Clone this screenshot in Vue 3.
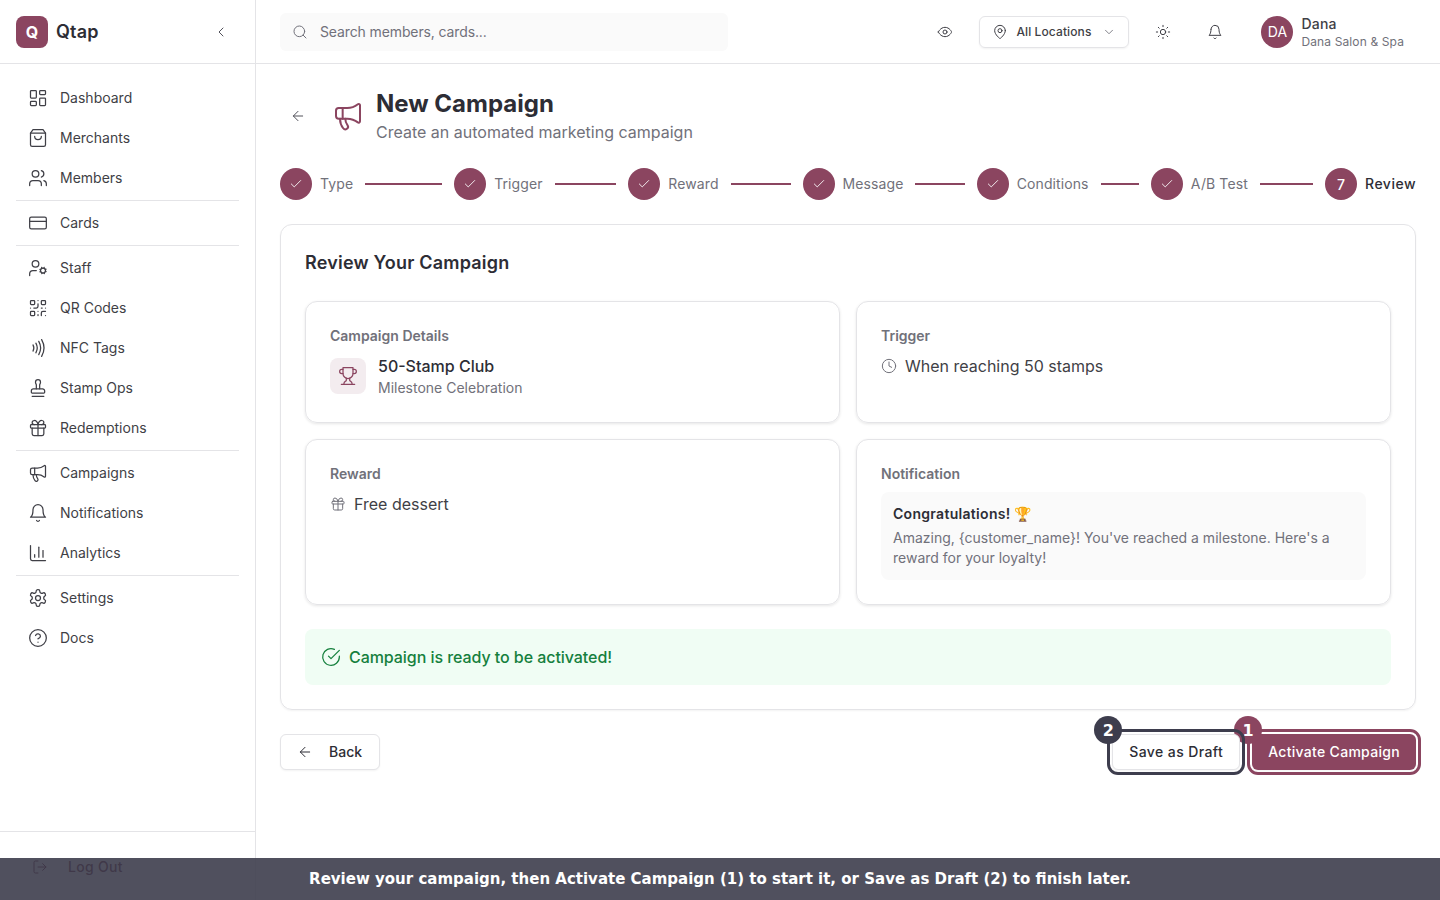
<script setup>
const icons = {
  dashboard: '<rect x="3" y="3" width="7" height="9" rx="1"/><rect x="14" y="3" width="7" height="5" rx="1"/><rect x="14" y="12" width="7" height="9" rx="1"/><rect x="3" y="16" width="7" height="5" rx="1"/>',
  bag: '<path d="M6 2 3 6v14a2 2 0 0 0 2 2h14a2 2 0 0 0 2-2V6l-3-4Z"/><path d="M3 6h18"/><path d="M16 10a4 4 0 0 1-8 0"/>',
  users: '<path d="M16 21v-2a4 4 0 0 0-4-4H6a4 4 0 0 0-4 4v2"/><circle cx="9" cy="7" r="4"/><path d="M22 21v-2a4 4 0 0 0-3-3.87"/><path d="M16 3.13a4 4 0 0 1 0 7.75"/>',
  card: '<rect x="2" y="5" width="20" height="14" rx="2"/><path d="M2 10h20"/>',
  staff: '<circle cx="18" cy="15" r="3"/><circle cx="9" cy="7" r="4"/><path d="M10 15H6a4 4 0 0 0-4 4v2"/><path d="m21.7 16.4-.9-.3"/><path d="m15.2 13.9-.9-.3"/><path d="m16.6 18.7.3-.9"/><path d="m19.1 12.2.3-.9"/><path d="m19.6 18.7-.4-1"/><path d="m16.8 12.3-.4-1"/><path d="m14.3 16.6 1-.4"/><path d="m20.7 13.8 1-.4"/>',
  qr: '<rect x="3" y="3" width="5" height="5" rx="1"/><rect x="16" y="3" width="5" height="5" rx="1"/><rect x="3" y="16" width="5" height="5" rx="1"/><path d="M21 16h-3a2 2 0 0 0-2 2v3"/><path d="M21 21v.01"/><path d="M12 7v3a2 2 0 0 1-2 2H7"/><path d="M3 12h.01"/><path d="M12 3h.01"/><path d="M12 16v.01"/><path d="M16 12h1"/><path d="M21 12v.01"/><path d="M12 21v-1"/>',
  nfc: '<path d="M6 8.32a7.43 7.43 0 0 1 0 7.36"/><path d="M9.46 6.21a11.76 11.76 0 0 1 0 11.58"/><path d="M12.91 4.1a15.91 15.91 0 0 1 .01 15.8"/><path d="M16.37 2a20.16 20.16 0 0 1 0 20"/>',
  stamp: '<path d="M5 22h14"/><path d="M19.27 13.73A2.5 2.5 0 0 0 17.5 13h-11A2.5 2.5 0 0 0 4 15.5V17a1 1 0 0 0 1 1h14a1 1 0 0 0 1-1v-1.5c0-.66-.26-1.3-.73-1.77Z"/><path d="M14 13V8.5C14 7 15 7 15 5a3 3 0 0 0-3-3c-1.66 0-3 1-3 3s1 2 1 3.5V13"/>',
  gift: '<rect x="3" y="8" width="18" height="4" rx="1"/><path d="M12 8v13"/><path d="M19 12v7a2 2 0 0 1-2 2H7a2 2 0 0 1-2-2v-7"/><path d="M7.5 8a2.5 2.5 0 0 1 0-5A4.8 8 0 0 1 12 8a4.8 8 0 0 1 4.5-5 2.5 2.5 0 0 1 0 5"/>',
  megaphone: '<path d="M11 6a13 13 0 0 0 8.4-2.8A1 1 0 0 1 21 4v12a1 1 0 0 1-1.6.8A13 13 0 0 0 11 14H5a2 2 0 0 1-2-2V8a2 2 0 0 1 2-2z"/><path d="M6 14a12 12 0 0 0 2.4 7.2 2 2 0 0 0 3.2-2.4A8 8 0 0 1 10 14"/><path d="M8 6v8"/>',
  bell: '<path d="M6 8a6 6 0 0 1 12 0c0 7 3 9 3 9H3s3-2 3-9"/><path d="M10.3 21a1.94 1.94 0 0 0 3.4 0"/>',
  chart: '<path d="M3 3v16a2 2 0 0 0 2 2h16"/><path d="M8 17v-3"/><path d="M13 17V5"/><path d="M18 17V9"/>',
  settings: '<path d="M12.22 2h-.44a2 2 0 0 0-2 2v.18a2 2 0 0 1-1 1.73l-.43.25a2 2 0 0 1-2 0l-.15-.08a2 2 0 0 0-2.73.73l-.22.38a2 2 0 0 0 .73 2.73l.15.1a2 2 0 0 1 1 1.72v.51a2 2 0 0 1-1 1.74l-.15.09a2 2 0 0 0-.73 2.73l.22.38a2 2 0 0 0 2.73.73l.15-.08a2 2 0 0 1 2 0l.43.25a2 2 0 0 1 1 1.73V20a2 2 0 0 0 2 2h.44a2 2 0 0 0 2-2v-.18a2 2 0 0 1 1-1.73l.43-.25a2 2 0 0 1 2 0l.15.08a2 2 0 0 0 2.73-.73l.22-.39a2 2 0 0 0-.73-2.73l-.15-.08a2 2 0 0 1-1-1.74v-.5a2 2 0 0 1 1-1.74l.15-.09a2 2 0 0 0 .73-2.73l-.22-.38a2 2 0 0 0-2.73-.73l-.15.08a2 2 0 0 1-2 0l-.43-.25a2 2 0 0 1-1-1.73V4a2 2 0 0 0-2-2z"/><circle cx="12" cy="12" r="3"/>',
  help: '<circle cx="12" cy="12" r="10"/><path d="M9.09 9a3 3 0 0 1 5.83 1c0 2-3 3-3 3"/><path d="M12 17h.01"/>',
  eye: '<path d="M2 12s3-7 10-7 10 7 10 7-3 7-10 7-10-7-10-7Z"/><circle cx="12" cy="12" r="3"/>',
  pin: '<path d="M20 10c0 6-8 12-8 12s-8-6-8-12a8 8 0 0 1 16 0Z"/><circle cx="12" cy="10" r="3"/>',
  sun: '<circle cx="12" cy="12" r="4"/><path d="M12 2v2"/><path d="M12 20v2"/><path d="m4.93 4.93 1.41 1.41"/><path d="m17.66 17.66 1.41 1.41"/><path d="M2 12h2"/><path d="M20 12h2"/><path d="m6.34 17.66-1.41 1.41"/><path d="m19.07 4.93-1.41 1.41"/>',
  search: '<circle cx="11" cy="11" r="8"/><path d="m21 21-4.3-4.3"/>',
  arrowLeft: '<path d="m12 19-7-7 7-7"/><path d="M19 12H5"/>',
  chevronLeft: '<path d="m15 18-6-6 6-6"/>',
  chevronDown: '<path d="m6 9 6 6 6-6"/>',
  check: '<path d="M20 6 9 17l-5-5"/>',
  trophy: '<path d="M6 9H4.5a2.5 2.5 0 0 1 0-5H6"/><path d="M18 9h1.5a2.5 2.5 0 0 0 0-5H18"/><path d="M4 22h16"/><path d="M10 14.66V17c0 .55-.47.98-.97 1.21C7.85 18.75 7 20.24 7 22"/><path d="M14 14.66V17c0 .55.47.98.97 1.21C16.15 18.75 17 20.24 17 22"/><path d="M18 2H6v7a6 6 0 0 0 12 0V2Z"/>',
  clock: '<circle cx="12" cy="12" r="10"/><path d="M12 6v6l4 2"/>',
  circleCheck: '<path d="M22 11.08V12a10 10 0 1 1-5.93-9.14"/><path d="m9 11 3 3L22 4"/>',
  logout: '<path d="M9 21H5a2 2 0 0 1-2-2V5a2 2 0 0 1 2-2h4"/><path d="m16 17 5-5-5-5"/><path d="M21 12H9"/>',
}

const navGroups = [
  [
    { label: "Dashboard", icon: "dashboard" },
    { label: "Merchants", icon: "bag" },
    { label: "Members", icon: "users" },
  ],
  [{ label: "Cards", icon: "card" }],
  [
    { label: "Staff", icon: "staff" },
    { label: "QR Codes", icon: "qr" },
    { label: "NFC Tags", icon: "nfc" },
    { label: "Stamp Ops", icon: "stamp" },
    { label: "Redemptions", icon: "gift" },
  ],
  [
    { label: "Campaigns", icon: "megaphone" },
    { label: "Notifications", icon: "bell" },
    { label: "Analytics", icon: "chart" },
  ],
  [
    { label: "Settings", icon: "settings" },
    { label: "Docs", icon: "help" },
  ],
]

const steps = ["Type", "Trigger", "Reward", "Message", "Conditions", "A/B Test"]
</script>

<template>
  <div class="app">
    <aside class="sidebar">
      <div class="brand">
        <span class="logo">Q</span>
        <span class="brand-name">Qtap</span>
        <svg class="ic collapse" viewBox="0 0 24 24" v-html="icons.chevronLeft"></svg>
      </div>

      <nav class="nav">
        <div v-for="(group, i) in navGroups" :key="i" class="nav-group">
          <a v-for="item in group" :key="item.label" class="nav-item">
            <svg class="ic nav-icon" viewBox="0 0 24 24" v-html="icons[item.icon]"></svg>
            <span class="raised">{{ item.label }}</span>
          </a>
        </div>
      </nav>

      <div class="side-foot">
        <a class="nav-item logout">
          <svg class="ic i16" viewBox="0 0 24 24" v-html="icons.logout"></svg>
          <span class="raised">Log Out</span>
        </a>
      </div>
    </aside>

    <div class="main">
      <header class="topbar">
        <div class="search">
          <svg class="ic search-icon" viewBox="0 0 24 24" v-html="icons.search"></svg>
          <span>Search members, cards...</span>
        </div>
        <div class="top-actions">
          <span class="icon-btn"><svg class="ic i16" viewBox="0 0 24 24" v-html="icons.eye"></svg></span>
          <div class="location">
            <svg class="ic i16" viewBox="0 0 24 24" v-html="icons.pin"></svg>
            <span class="location-name">All Locations</span>
            <svg class="ic i14 soft" viewBox="0 0 24 24" v-html="icons.chevronDown"></svg>
          </div>
          <span class="icon-btn"><svg class="ic i16" viewBox="0 0 24 24" v-html="icons.sun"></svg></span>
          <span class="icon-btn bell"><svg class="ic i16" viewBox="0 0 24 24" v-html="icons.bell"></svg></span>
          <div class="user">
            <span class="avatar">DA</span>
            <div class="user-text">
              <div class="user-name">Dana</div>
              <div class="user-org">Dana Salon &amp; Spa</div>
            </div>
          </div>
        </div>
      </header>

      <main class="page">
        <div class="page-head">
          <svg class="ic back-arrow" viewBox="0 0 24 24" v-html="icons.arrowLeft"></svg>
          <svg class="ic head-icon" viewBox="0 0 24 24" v-html="icons.megaphone"></svg>
          <div>
            <h1>New Campaign</h1>
            <p>Create an automated marketing campaign</p>
          </div>
        </div>

        <div class="stepper">
          <div v-for="step in steps" :key="step" class="step-slot">
            <div class="step">
              <span class="step-dot">
                <svg class="ic i14" viewBox="0 0 24 24" v-html="icons.check"></svg>
              </span>
              <span class="step-label raised">{{ step }}</span>
            </div>
            <div class="step-line"></div>
          </div>
          <div class="step">
            <span class="step-dot current">7</span>
            <span class="step-label active raised">Review</span>
          </div>
        </div>

        <section class="panel">
          <h2>Review Your Campaign</h2>

          <div class="review-grid">
            <div class="box">
              <div class="box-label">Campaign Details</div>
              <div class="detail">
                <span class="detail-icon">
                  <svg class="ic trophy" viewBox="0 0 24 24" v-html="icons.trophy"></svg>
                </span>
                <div>
                  <div class="detail-name">50-Stamp Club</div>
                  <div class="detail-sub">Milestone Celebration</div>
                </div>
              </div>
            </div>

            <div class="box">
              <div class="box-label">Trigger</div>
              <div class="value-row">
                <svg class="ic i16 soft" viewBox="0 0 24 24" v-html="icons.clock"></svg>
                <span>When reaching 50 stamps</span>
              </div>
            </div>

            <div class="box">
              <div class="box-label">Reward</div>
              <div class="value-row">
                <svg class="ic i16 soft" viewBox="0 0 24 24" v-html="icons.gift"></svg>
                <span>Free dessert</span>
              </div>
            </div>

            <div class="box">
              <div class="box-label">Notification</div>
              <div class="message">
                <div class="message-title">Congratulations! 🏆</div>
                <div class="message-body">Amazing, {customer_name}! You've reached a milestone. Here's a reward for your loyalty!</div>
              </div>
            </div>
          </div>

          <div class="ready">
            <svg class="ic ready-icon" viewBox="0 0 24 24" v-html="icons.circleCheck"></svg>
            <span>Campaign is ready to be activated!</span>
          </div>
        </section>

        <div class="actions">
          <button class="btn back">
            <svg class="ic i16" viewBox="0 0 24 24" v-html="icons.arrowLeft"></svg>
            <span class="raised">Back</span>
          </button>
          <div class="actions-right">
            <button class="btn draft">
              <span class="badge">2</span>
              <span class="raised">Save as Draft</span>
            </button>
            <button class="btn activate">
              <span class="badge">1</span>
              <span class="raised">Activate Campaign</span>
            </button>
          </div>
        </div>
      </main>
    </div>

    <div class="tour-bar">Review your campaign, then Activate Campaign (1) to start it, or Save as Draft (2) to finish later.</div>
  </div>
</template>

<style>
html,
body {
  margin: 0;
  background: #fff;
}
</style>

<style scoped>
.app {
  display: flex;
  height: 900px;
  overflow: hidden;
  position: relative;
  font-family: Inter, "Liberation Sans", sans-serif;
  color: #2d2d35;
  background: #fff;
}

.ic {
  width: 20px;
  height: 20px;
  flex: none;
  fill: none;
  stroke: currentColor;
  stroke-width: 1.5;
  stroke-linecap: round;
  stroke-linejoin: round;
}

.i16 {
  width: 16px;
  height: 16px;
}

.i14 {
  width: 14px;
  height: 14px;
}

.soft {
  color: #71717a;
}

/* text sits a pixel above the icon centre line in flex rows */
.raised {
  margin-bottom: 2px;
}

/* sidebar */
.sidebar {
  width: 256px;
  flex: none;
  box-sizing: border-box;
  border-right: 1px solid #e4e4e7;
  display: flex;
  flex-direction: column;
}

.brand {
  height: 64px;
  flex: none;
  box-sizing: border-box;
  border-bottom: 1px solid #e4e4e7;
  display: flex;
  align-items: center;
  padding: 0 26px 0 16px;
}

.logo {
  width: 32px;
  height: 32px;
  border-radius: 8px;
  background: #8b4560;
  color: #fff;
  font-weight: 700;
  font-size: 16px;
  display: flex;
  align-items: center;
  justify-content: center;
}

.brand-name {
  margin-left: 8px;
  font-size: 18px;
  font-weight: 600;
  letter-spacing: 0.2px;
  flex: 1;
}

.collapse {
  width: 16px;
  height: 16px;
  color: #52525b;
}

.nav {
  flex: 1;
  padding: 14px 16px 0;
}

.nav-group + .nav-group {
  margin-top: 2px;
  padding-top: 2px;
  border-top: 1px solid #e4e4e7;
}

.nav-item {
  height: 40px;
  display: flex;
  align-items: center;
  gap: 12px;
  padding: 0 12px;
  font-size: 14px;
  color: #3f3f46;
}

.side-foot {
  border-top: 1px solid #e4e4e7;
  padding: 15px 16px 13px;
}

.logout {
  color: #5a1029;
  font-weight: 500;
  letter-spacing: 0.3px;
  padding-left: 16px;
  gap: 20px;
}

/* top bar */
.main {
  flex: 1;
  min-width: 0;
}

.topbar {
  height: 64px;
  box-sizing: border-box;
  border-bottom: 1px solid #e4e4e7;
  display: flex;
  align-items: center;
  justify-content: space-between;
  padding: 0 36px 0 24px;
}

.search {
  width: 448px;
  height: 38px;
  box-sizing: border-box;
  background: #fafafa;
  border-radius: 6px;
  display: flex;
  align-items: center;
  padding-left: 12px;
  gap: 12px;
  font-size: 14px;
  letter-spacing: -0.12px;
  color: #71717a;
}

.search-icon {
  width: 16px;
  height: 16px;
}

.top-actions {
  display: flex;
  align-items: center;
  gap: 18px;
}

.icon-btn {
  width: 32px;
  height: 32px;
  display: flex;
  align-items: center;
  justify-content: center;
  color: #3f3f46;
}

.bell {
  margin-left: 2px;
}

.location {
  width: 150px;
  height: 32px;
  box-sizing: border-box;
  border: 1px solid #e4e4e7;
  border-radius: 6px;
  box-shadow: 0 1px 2px rgba(0, 0, 0, 0.05);
  display: flex;
  align-items: center;
  padding: 0 12px;
  gap: 8px;
  color: #3f3f46;
}

.location-name {
  font-size: 12px;
  font-weight: 500;
  letter-spacing: 0.1px;
  flex: 1;
  white-space: nowrap;
}

.user {
  display: flex;
  align-items: center;
  gap: 8px;
  margin-left: 12px;
}

.avatar {
  width: 32px;
  height: 32px;
  border-radius: 50%;
  background: #8b4560;
  color: #fff;
  font-size: 14px;
  display: flex;
  align-items: center;
  justify-content: center;
}

.user-text {
  padding-top: 2px;
}

.user-name {
  font-size: 14px;
  font-weight: 500;
  line-height: 18px;
  letter-spacing: 0.2px;
  color: #3f3f46;
}

.user-org {
  font-size: 12px;
  line-height: 18px;
  letter-spacing: 0.12px;
  color: #71717a;
}

/* page */
.page {
  padding: 24px;
}

.page-head {
  display: flex;
  align-items: center;
}

.back-arrow {
  width: 16px;
  height: 16px;
  margin: 0 26px 0 10px;
  color: #52525b;
}

.head-icon {
  width: 32px;
  height: 32px;
  margin-right: 12px;
  color: #8b4560;
}

h1 {
  margin: 0;
  font-size: 24px;
  line-height: 32px;
  font-weight: 700;
}

.page-head p {
  margin: 0;
  font-size: 16px;
  line-height: 24px;
  color: #71717a;
}

.stepper {
  display: flex;
  align-items: center;
  margin: 24px 0;
}

.step-slot {
  flex: 1;
  display: flex;
  align-items: center;
}

.step {
  display: flex;
  align-items: center;
  gap: 8px;
}

.step-dot {
  width: 32px;
  height: 32px;
  border-radius: 50%;
  background: #8b4560;
  color: #fff;
  display: flex;
  align-items: center;
  justify-content: center;
  font-size: 14px;
  font-weight: 500;
}

.step-label {
  font-size: 14px;
  letter-spacing: 0.1px;
  color: #71717a;
}

.step-label.active {
  font-weight: 500;
  letter-spacing: 0.5px;
  color: #2d2d35;
}

.step-line {
  flex: 1;
  height: 2px;
  margin: 0 12px;
  background: #8b4560;
}

.panel {
  border: 1px solid #e4e4e7;
  border-radius: 12px;
  padding: 24px;
  box-shadow: 0 1px 2px rgba(0, 0, 0, 0.05);
}

h2 {
  margin: 0 0 24px;
  font-size: 18px;
  line-height: 28px;
  font-weight: 600;
  letter-spacing: 0.2px;
}

.review-grid {
  display: grid;
  grid-template-columns: 1fr 1fr;
  gap: 16px;
}

.box {
  border: 1px solid #e4e4e7;
  border-radius: 12px;
  padding: 24px;
  box-shadow: 0 1px 3px rgba(0, 0, 0, 0.1);
}

.box-label {
  font-size: 14px;
  line-height: 20px;
  font-weight: 600;
  color: #71717a;
  margin-bottom: 8px;
}

.detail {
  display: flex;
  align-items: center;
  gap: 12px;
}

.detail-icon {
  width: 36px;
  height: 36px;
  border-radius: 8px;
  background: #f3ecef;
  display: flex;
  align-items: center;
  justify-content: center;
  color: #8b4560;
}

.detail-name {
  font-size: 16px;
  line-height: 24px;
  font-weight: 500;
}

.detail-sub {
  font-size: 14px;
  line-height: 20px;
  color: #71717a;
}

.value-row {
  display: flex;
  align-items: center;
  gap: 8px;
  font-size: 16px;
  line-height: 24px;
  color: #3f3f46;
}

.message {
  background: #fafafa;
  border-radius: 8px;
  padding: 12px;
}

.message-title {
  font-size: 14px;
  line-height: 20px;
  font-weight: 600;
  letter-spacing: 0.3px;
  margin-bottom: 4px;
}

.message-body {
  font-size: 14px;
  line-height: 20px;
  color: #71717a;
}

.ready {
  margin-top: 24px;
  background: #f0fdf4;
  border-radius: 8px;
  padding: 16px;
  display: flex;
  align-items: center;
  gap: 8px;
  font-size: 16px;
  line-height: 24px;
  font-weight: 500;
  letter-spacing: -0.06px;
  color: #15803d;
}

.ready-icon {
  color: #15803d;
}

/* buttons */
.actions {
  margin-top: 24px;
  display: flex;
  justify-content: space-between;
}

.actions-right {
  display: flex;
  gap: 12px;
}

.btn {
  position: relative;
  height: 36px;
  box-sizing: border-box;
  border-radius: 6px;
  border: 1px solid #e4e4e7;
  background: #fff;
  font-family: inherit;
  font-size: 14px;
  font-weight: 500;
  color: #2d2d35;
  padding: 0 16px;
  display: flex;
  align-items: center;
  box-shadow: 0 1px 2px rgba(0, 0, 0, 0.05);
}

.back {
  width: 100px;
  gap: 16px;
}

.draft {
  z-index: 2;
  letter-spacing: 0.4px;
  outline: 3px solid #3d3d4d;
  outline-offset: 2px;
}

.activate {
  background: #8b4560;
  border: none;
  color: #fff;
  letter-spacing: 0.3px;
  outline: 3px solid #8b4560;
  outline-offset: 2px;
}

.badge {
  position: absolute;
  left: -18px;
  top: -18px;
  width: 28px;
  height: 28px;
  border-radius: 50%;
  display: flex;
  align-items: center;
  justify-content: center;
  color: #fff;
  font-family: "DejaVu Sans", sans-serif;
  font-size: 16px;
  font-weight: 700;
  letter-spacing: 0;
  background: #3d3d4d;
}

.draft .badge {
  left: -19px;
  top: -19px;
}

.activate .badge {
  background: #8b4560;
}

/* tour hint over the page */
.tour-bar {
  position: absolute;
  left: 0;
  right: 0;
  bottom: 0;
  height: 42px;
  background: rgba(61, 61, 77, 0.9);
  color: #fff;
  display: flex;
  align-items: center;
  justify-content: center;
  font-family: "DejaVu Sans", sans-serif;
  font-size: 15px;
  font-weight: 700;
}
</style>
